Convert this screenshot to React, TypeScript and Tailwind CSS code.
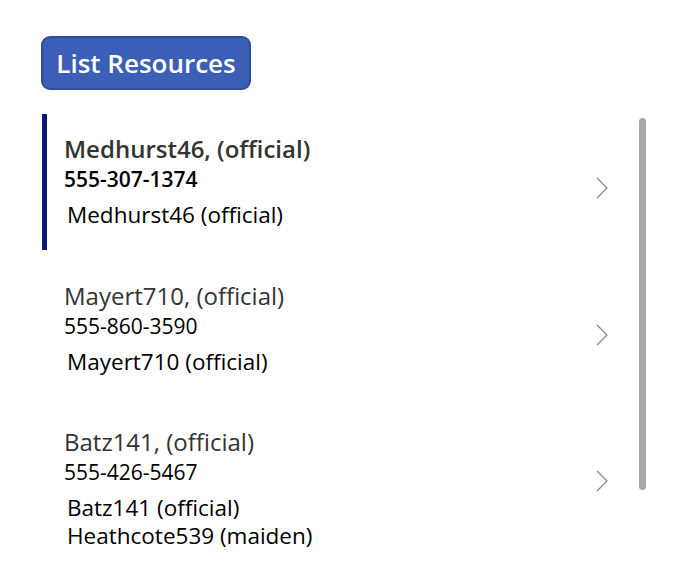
import React from 'react';

type Person = {
  title: string;
  phone: string;
  names: string[];
};

const people: Person[] = [
  { title: 'Medhurst46, (official)', phone: '555-307-1374', names: ['Medhurst46 (official)'] },
  { title: 'Mayert710, (official)', phone: '555-860-3590', names: ['Mayert710 (official)'] },
  { title: 'Batz141, (official)', phone: '555-426-5467', names: ['Batz141 (official)', 'Heathcote539 (maiden)'] },
];

function Chevron() {
  return (
    <svg width="14" height="24" viewBox="0 0 14 24" className="shrink-0">
      <polyline points="2,2 12,12 2,22" fill="none" stroke="#8a8a8a" strokeWidth="1.3" />
    </svg>
  );
}

function Row({ person, selected }: { person: Person; selected: boolean }) {
  return (
    <div className="flex h-[146.5px]">
      <div className={`w-[5px] h-[136px] shrink-0 ${selected ? 'bg-[#0a1a6e]' : ''}`} />
      <div className="flex flex-1 items-start">
        <div className="flex-1 pl-[17px] pt-[20px]">
          <div className={`text-[24px] leading-[30px] text-[#333] ${selected ? 'font-semibold' : ''}`}>
            {person.title}
          </div>
          <div className={`text-[21px] leading-[30px] text-black ${selected ? 'font-semibold' : ''}`}>
            {person.phone}
          </div>
          <div className="pl-[3px] pt-[7px] text-[22.5px] leading-[28px] text-black">
            {person.names.map((n) => (
              <div key={n}>{n}</div>
            ))}
          </div>
        </div>
        <div className="pr-[15px] pt-[62px]">
          <Chevron />
        </div>
      </div>
    </div>
  );
}

export default function App() {
  return (
    <div className="h-[569px] w-full bg-white font-['Open_Sans',sans-serif] overflow-hidden">
      <div className="pl-[41px] pt-[36px]">
        <button className="h-[54px] w-[210px] rounded-[9px] border-2 border-[#2f4f9e] bg-[#3b5fb6] text-[26px] font-semibold text-white">
          List Resources
        </button>
      </div>
      <div className="mt-[24px] flex pl-[42px]">
        <div className="w-[582px]">
          {people.map((p, i) => (
            <Row key={p.phone} person={p} selected={i === 0} />
          ))}
        </div>
        <div className="ml-[15px] mt-[4px] h-[372px] w-[7px] rounded-full bg-[#a8a8a8]" />
      </div>
    </div>
  );
}
